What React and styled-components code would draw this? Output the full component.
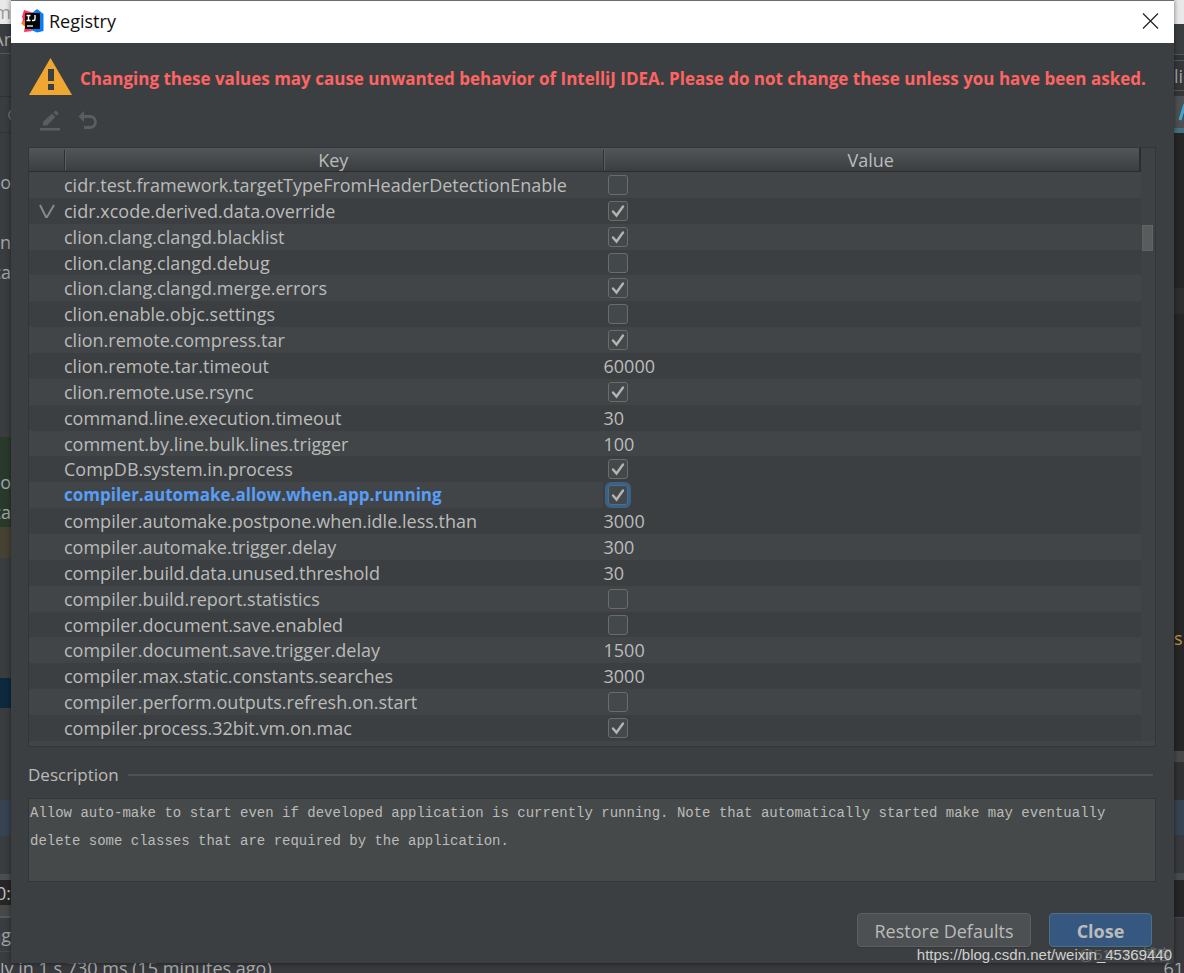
import React, { useState } from "react";
import styled, { createGlobalStyle, css } from "styled-components";

const GlobalStyle = createGlobalStyle`
  * { box-sizing: border-box; }
  body {
    margin: 0;
    background: #3c3f41;
    color: #bbbbbb;
    font-family: "Open Sans", "Noto Sans", "Noto Sans CJK SC", sans-serif;
    font-size: 18px;
    line-height: 24px;
  }
`;

const Desktop = styled.div`
  position: relative;
  display: grid;
  grid-template-columns: 11px minmax(0, 1fr) 10px;
  grid-template-rows: auto 10px;
  min-height: 100vh;
  overflow: hidden;
`;

const Strip = styled.div`
  display: flex;
  flex-direction: column;
  height: 963px;
  overflow: hidden;
`;

const Band = styled.div`
  flex: none;
  display: flex;
  align-items: center;
  justify-content: ${(p) => (p.$end ? "flex-end" : "flex-start")};
  height: ${(p) => p.$h}px;
  overflow: hidden;
  white-space: nowrap;
  background: ${(p) => p.$bg || "#3a3d3f"};
  color: ${(p) => p.$color || "#a4a6a7"};
`;

const StatusBar = styled.div`
  grid-column: 1 / -1;
  display: flex;
  align-items: center;
  justify-content: space-between;
  overflow: hidden;
  background: #38393c;
  color: #a9abac;
  white-space: nowrap;
`;

const Dialog = styled.main`
  position: relative;
  display: flex;
  flex-direction: column;
  background: #3c3f41;
  border-top: 1px solid #6e6e6e;
  box-shadow: 0 0 5px rgba(0, 0, 0, 0.5);
`;

const TitleBar = styled.header`
  display: flex;
  align-items: center;
  gap: 5px;
  height: 42px;
  padding: 0 15px 2px 10px;
  background: #ffffff;
  color: #111111;
`;

const Title = styled.h1`
  flex: 1;
  margin: 0;
  font-size: 18px;
  font-weight: 400;
  line-height: 24px;
`;

const IconButton = styled.button`
  display: grid;
  place-items: center;
  padding: 0;
  border: 0;
  background: none;
`;

const Content = styled.div`
  flex: 1;
  display: flex;
  flex-direction: column;
  padding: 14px 18px 15px 17px;
`;

const Warning = styled.div`
  display: flex;
  align-items: center;
  gap: 8px;
  height: 38px;
  color: #ff6464;
  font-size: 17px;
  font-weight: 700;
  white-space: nowrap;
  svg { flex: none; }
  span { padding-top: 5px; }
`;

const Toolbar = styled.div`
  display: flex;
  align-items: center;
  gap: 16px;
  height: 52px;
  padding-left: 11px;
`;

const TableFrame = styled.div`
  display: grid;
  grid-template-columns: minmax(0, 1fr) 14px;
  padding-bottom: 5px;
  border: 1px solid #333638;
  background: #414547;
`;

const Table = styled.table`
  width: 100%;
  height: 593px;
  table-layout: fixed;
  border-collapse: separate;
  border-spacing: 0;
`;

const HeadCell = styled.th`
  width: ${(p) => p.$w || "auto"};
  height: 24px;
  padding: 0;
  font-weight: 400;
  line-height: 22px;
  background:
    ${(p) => (p.$divided ? "linear-gradient(90deg, #2e3032 1px, #5b5f61 1px, #5b5f61 2px, transparent 2px) left center / 2px 20px no-repeat," : "")}
    linear-gradient(#525659, #3b3e40);
  border-bottom: 1px solid #2b2d2f;
  &:last-child { border-right: 2px solid #2b2d2f; }
`;

const Row = styled.tr`
  background: #3c3f41;
  &:nth-child(odd) { background: #414547; }
`;

const Cell = styled.td`
  padding: 0 0 0 ${(p) => (p.$value ? 1 : 0)}px;
  white-space: nowrap;
  line-height: 24px;
  vertical-align: middle;
  ${(p) => p.$changed && css`
    color: #589df6;
    font-size: 17px;
    font-weight: 700;
  `}
  ${(p) => p.$editing && css`background: #3c3f41;`}
`;

const Modified = styled.svg`
  display: block;
  margin-left: 9px;
`;

const Tick = styled.label`
  display: grid;
  width: 20px;
  height: 20px;
  margin-left: 4px;
  > * { grid-area: 1 / 1; }
  svg { pointer-events: none; visibility: hidden; z-index: 1; }
  input:checked + svg { visibility: visible; }
`;

const TickBox = styled.input`
  appearance: none;
  width: 20px;
  height: 20px;
  margin: 0;
  border: 1px solid #6b6b6b;
  border-radius: 3px;
  background: #43494a;
  ${(p) => p.$focused && css`
    border-color: #466d94;
    box-shadow: 0 0 0 3px #3d6185;
  `}
`;

const ScrollTrack = styled.div`
  padding: 77px 2px 0 1px;
  background: #3f4244;
`;

const ScrollThumb = styled.div`
  height: 26px;
  background: #595c5d;
  border: 1px solid #616465;
`;

const Legend = styled.label`
  display: flex;
  align-items: center;
  gap: 9px;
  height: 51px;
  padding: 4px 3px 0 0;
  font-size: 17px;
  &::after {
    content: "";
    flex: 1;
    height: 2px;
    background: #515151;
  }
`;

const Description = styled.textarea`
  display: block;
  width: 100%;
  height: 84px;
  padding: 0 1px;
  border: 1px solid #333638;
  border-radius: 0;
  outline: 0;
  resize: none;
  overflow: hidden;
  background: #45494a;
  color: #bbbbbb;
  font: 14px/28px "Liberation Mono", monospace;
`;

const Footer = styled.footer`
  display: flex;
  justify-content: flex-end;
  gap: 18px;
  padding: 31px 4px 0 0;
`;

const Button = styled.button`
  height: 34px;
  padding: 2px 0 0;
  width: ${(p) => (p.$primary ? 103 : 174)}px;
  border: 1px solid ${(p) => (p.$primary ? "#4c708c" : "#5e6060")};
  border-radius: 4px;
  background: ${(p) => (p.$primary ? "#365880" : "#4c5052")};
  box-shadow: 0 1px 1px #35383a;
  color: #bbbbbb;
  font-family: inherit;
  font-size: 18px;
  font-weight: ${(p) => (p.$primary ? 700 : 400)};
`;

const Watermark = styled.div`
  position: absolute;
  right: 12px;
  bottom: 8px;
  font: 15px/20px "Liberation Sans", sans-serif;
  color: #d0d0d0;
`;

const FaintMark = styled(Watermark)`
  font-family: "Liberation Sans", "Noto Sans CJK SC", sans-serif;
  color: rgba(255, 255, 255, 0.22);
`;

const rows = [
  ["cidr.test.framework.targetTypeFromHeaderDetectionEnable", false],
  ["cidr.xcode.derived.data.override", true, "restart"],
  ["clion.clang.clangd.blacklist", true],
  ["clion.clang.clangd.debug", false],
  ["clion.clang.clangd.merge.errors", true],
  ["clion.enable.objc.settings", false],
  ["clion.remote.compress.tar", true],
  ["clion.remote.tar.timeout", "60000"],
  ["clion.remote.use.rsync", true],
  ["command.line.execution.timeout", "30"],
  ["comment.by.line.bulk.lines.trigger", "100"],
  ["CompDB.system.in.process", true],
  ["compiler.automake.allow.when.app.running", true, "changed"],
  ["compiler.automake.postpone.when.idle.less.than", "3000"],
  ["compiler.automake.trigger.delay", "300"],
  ["compiler.build.data.unused.threshold", "30"],
  ["compiler.build.report.statistics", false],
  ["compiler.document.save.enabled", false],
  ["compiler.document.save.trigger.delay", "1500"],
  ["compiler.max.static.constants.searches", "3000"],
  ["compiler.perform.outputs.refresh.on.start", false],
  ["compiler.process.32bit.vm.on.mac", true],
];

const leftBands = [
  { h: 24, bg: "#e9e9e9", color: "#999999", text: "m" },
  { h: 29, text: "Ar" },
  { h: 1, bg: "#55585a" },
  { h: 42 },
  { h: 1, bg: "#2f3133" },
  { h: 35, dot: true },
  { h: 1, bg: "#2f3133" },
  { h: 35 },
  { h: 28, text: "o" },
  { h: 32 },
  { h: 28, text: "n" },
  { h: 2 },
  { h: 28, text: "ca" },
  { h: 151 },
  { h: 30, bg: "#293a2c" },
  { h: 30, bg: "#293a2c", text: "o" },
  { h: 30, bg: "#293a2c", text: "ca" },
  { h: 31, bg: "#464133" },
  { h: 120 },
  { h: 30, bg: "#0d293e" },
  { h: 92 },
  { h: 36, bg: "#374350" },
  { h: 38 },
  { h: 6, bg: "#4a4e50" },
  { h: 25, bg: "#262626", color: "#c0c0c0", text: "0:" },
  { h: 11, bg: "#484848" },
  { h: 2, bg: "#55585a" },
  { h: 33, text: "ng" },
  { h: 1, bg: "#484b4d" },
  { h: 11 },
];

const rightBands = [
  { h: 24, bg: "#e9e9e9" },
  { h: 30 },
  { h: 1, bg: "#55585a" },
  { h: 5, bg: "#323436" },
  { h: 1, bg: "#55585a" },
  { h: 29, bg: "#343638", text: "lic" },
  { h: 1, bg: "#55585a" },
  { h: 5, bg: "#343638" },
  { h: 32, bg: "#4c5052", slash: true },
  { h: 5, bg: "#47707d" },
  { h: 155, bg: "#262626" },
  { h: 26, bg: "#2e2e2e" },
  { h: 310, bg: "#262626" },
  { h: 28, bg: "#262626", color: "#b8954f", text: "s" },
  { h: 99, bg: "#262626" },
  { h: 11, bg: "#484848" },
  { h: 38, bg: "#2f3133" },
  { h: 35, bg: "#374350" },
  { h: 38, bg: "#38393c" },
  { h: 7, bg: "#484b4d" },
  { h: 37, bg: "#262626" },
  { h: 1, bg: "#484b4d" },
  { h: 45, bg: "#38393c" },
];

function ProductLogo() {
  return (
    <svg width="23" height="24" viewBox="0 0 23 24" aria-hidden="true">
      <path d="M3 1 L13 4 L8 20 L12 22 L3 23 L4 17 L1 14 L2 10 L1 8Z" fill="#fe315d" />
      <path d="M0 14 L7 9 L7 18 L3 17Z" fill="#f97a12" />
      <path d="M11 4 L16 0 L22.500 5 L22.500 22 L16 23.500 L8 20Z" fill="#087cfa" />
      <rect x="4" y="4" width="15" height="16" fill="#050505" />
      <path d="M5.500 6.500h4M7.500 6.500v5M5.500 11.500h4M14 6v4q0 1.500-1.500 1.500H11" fill="none" stroke="#fff" strokeWidth="1.400" />
      <path d="M6 17h6" stroke="#fff" strokeWidth="1.300" />
    </svg>
  );
}

function CheckBox({ name, initial, focused }) {
  const [checked, setChecked] = useState(initial);
  return (
    <Tick>
      <TickBox type="checkbox" aria-label={name} checked={checked} $focused={focused} onChange={() => setChecked(!checked)} />
      <svg width="20" height="20" viewBox="0 0 20 20" aria-hidden="true">
        <path d="M5 10.500 L8.500 14.500 L15 5.500" fill="none" stroke="#b4b4b4" strokeWidth="2.400" strokeLinecap="round" />
      </svg>
    </Tick>
  );
}

function Bands({ items, end }) {
  return (
    <Strip aria-hidden="true">
      {items.map((b, i) => (
        <Band key={i} $h={b.h} $bg={b.bg} $color={b.color} $end={end}>
          {b.text}
          {b.slash && (
            <svg width="10" height="20" viewBox="0 0 10 20">
              <path d="M6 18 L11 2" stroke="#3fa7cb" strokeWidth="3" />
            </svg>
          )}
          {b.dot && (
            <svg width="3" height="12" viewBox="0 0 3 12">
              <circle cx="6" cy="6" r="5" fill="none" stroke="#66696b" strokeWidth="2" />
            </svg>
          )}
        </Band>
      ))}
    </Strip>
  );
}

export default function App() {
  return (
    <>
      <GlobalStyle />
      <Desktop>
        <Bands items={leftBands} end />
        <Dialog>
          <TitleBar>
            <ProductLogo />
            <Title>Registry</Title>
            <IconButton aria-label="Close window">
              <svg width="17" height="16" viewBox="0 0 17 16">
                <path d="M1 .5 L16 15.500 M16 .5 L1 15.500" stroke="#222" strokeWidth="1.200" />
              </svg>
            </IconButton>
          </TitleBar>
          <Content>
            <Warning role="alert">
              <svg width="44" height="38" viewBox="0 0 44 38" aria-hidden="true">
                <path d="M22.500 1 L44 38 H1Z" fill="#f0a732" />
                <path d="M20 12h6v12h-6zM20 27h6v6h-6z" fill="#3c3f41" />
              </svg>
              <span>Changing these values may cause unwanted behavior of IntelliJ IDEA. Please do not change these unless you have been asked.</span>
            </Warning>
            <Toolbar>
              <IconButton aria-label="Edit" disabled>
                <svg width="22" height="22" viewBox="0 0 22 22" fill="#5b5d5e">
                  <path d="M1 18h20v2.500H1z" />
                  <path d="M4 12 L13 3.500 L16.500 7 L8 15.500 H4Z" />
                  <path d="M14.500 2.500 L16 1 Q17 .5 18 1.500 L19 2.500 Q20 3.500 19 4.500 L17.500 5.500Z" />
                </svg>
              </IconButton>
              <IconButton aria-label="Revert" disabled>
                <svg width="22" height="22" viewBox="0 0 22 22">
                  <path d="M1.500 6.500 L7 1 V12Z" fill="#5b5d5e" />
                  <path d="M6 6.500 H13 A5.500 5.500 0 0 1 13 17.500 H7" fill="none" stroke="#5b5d5e" strokeWidth="2.800" />
                </svg>
              </IconButton>
            </Toolbar>
            <TableFrame>
              <Table>
                <thead>
                  <tr>
                    <HeadCell $w="35px" aria-label="Status" />
                    <HeadCell $divided>Key</HeadCell>
                    <HeadCell $divided>Value</HeadCell>
                  </tr>
                </thead>
                <tbody>
                  {rows.map(([name, value, state]) => {
                    const changed = state === "changed";
                    return (
                      <Row key={name}>
                        <Cell>
                          {state === "restart" && (
                            <Modified width="18" height="18" viewBox="0 0 18 18" aria-hidden="true">
                              <path d="M2 3 L8 15 L9 15 L16 3" fill="none" stroke="#7f8b91" strokeWidth="2" />
                            </Modified>
                          )}
                        </Cell>
                        <Cell $changed={changed}>{name}</Cell>
                        <Cell $value $editing={changed}>
                          {typeof value === "boolean" ? <CheckBox name={name} initial={value} focused={changed} /> : value}
                        </Cell>
                      </Row>
                    );
                  })}
                </tbody>
              </Table>
              <ScrollTrack>
                <ScrollThumb />
              </ScrollTrack>
            </TableFrame>
            <Legend htmlFor="description">Description</Legend>
            <Description
              id="description"
              readOnly
              value="Allow auto-make to start even if developed application is currently running. Note that automatically started make may eventually delete some classes that are required by the application."
            />
            <Footer>
              <Button type="button">Restore Defaults</Button>
              <Button type="button" $primary>Close</Button>
            </Footer>
          </Content>
        </Dialog>
        <Bands items={rightBands} />
        <StatusBar>
          <span>ly in 1 s 730 ms (15 minutes ago)</span>
          <span>61</span>
        </StatusBar>
        <FaintMark>@51CTO博客</FaintMark>
        <Watermark>https://blog.csdn.net/weixin_45369440</Watermark>
      </Desktop>
    </>
  );
}
